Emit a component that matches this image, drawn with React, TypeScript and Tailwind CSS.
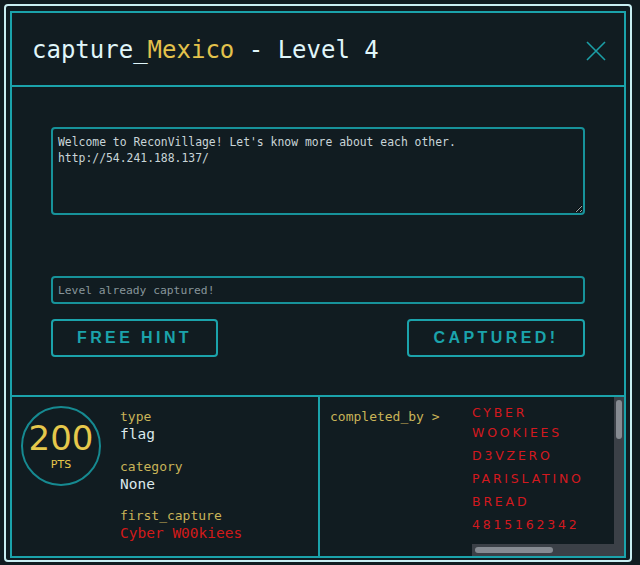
import React from "react";

const names = ["CYBER WOOKIEES", "D3VZERO", "PARISLATINO", "BREAD", "4815162342"];

export default function App() {
  return (
    <div className="w-[640px] h-[565px] bg-[#111c21] pt-[4px] pl-[4px]">
      <div className="w-[628px] h-[558px] border-2 border-[#c9eef2] rounded-[4px] pt-[5px] pl-[4px]">
        <div className="w-[616px] h-[547px] border-2 border-[#1ba3ab] flex flex-col">
          {/* header */}
          <div className="h-[74px] shrink-0 border-b-2 border-[#1ba3ab] flex items-center justify-between pl-[20px] pr-[18px]">
            <h1 className="mt-[2px] font-['DejaVu_Sans_Mono',monospace] text-[24px] text-[#e0f6fa]">
              capture_<span className="text-[#e3c24c]">Mexico</span> - Level 4
            </h1>
            <svg width="20" height="20" viewBox="0 0 20 20" className="mt-[3px]">
              <path d="M1 1 L19 19 M19 1 L1 19" stroke="#1b9fa7" strokeWidth="1.6" fill="none" />
            </svg>
          </div>

          {/* body */}
          <div className="h-[310px] shrink-0 border-b-2 border-[#1ba3ab] pt-[40px] px-[39px] flex flex-col">
            <textarea
              readOnly
              defaultValue={"Welcome to ReconVillage! Let's know more about each other.\nhttp://54.241.188.137/"}
              className="w-full h-[88px] bg-transparent border-2 border-[#17929a] rounded-[4px] pt-[5px] px-[5px] font-['DejaVu_Sans_Mono',monospace] text-[11.4px] leading-[16px] text-[#c9d5d8] outline-none"
            />
            <input
              readOnly
              placeholder="Level already captured!"
              className="mt-[61px] w-full h-[28px] bg-transparent border-2 border-[#17929a] rounded-[4px] px-[5px] font-['DejaVu_Sans_Mono',monospace] text-[11.3px] text-[#c9d5d8] placeholder:text-[#87959a] outline-none"
            />
            <div className="mt-[15px] flex justify-between">
              <button className="w-[167px] h-[38px] border-2 border-[#1ba3ab] rounded-[4px] font-['Liberation_Sans',sans-serif] font-bold text-[16px] tracking-[3.4px] text-[#1ba3ab]">
                FREE HINT
              </button>
              <button className="w-[178px] h-[38px] border-2 border-[#1ba3ab] rounded-[4px] font-['Liberation_Sans',sans-serif] font-bold text-[16px] tracking-[3.4px] text-[#1ba3ab]">
                CAPTURED!
              </button>
            </div>
          </div>

          {/* footer stats */}
          <div className="flex-1 flex min-h-0">
            <div className="w-[308px] shrink-0 border-r-2 border-[#1ba3ab] flex pl-[9px] pt-[9px]">
              <div className="w-[80px] h-[80px] rounded-full border-2 border-[#168a91] flex flex-col items-center pt-[13px] text-[#e6c84b] font-['DejaVu_Sans',sans-serif]">
                <div className="text-[34px] leading-[34px]">200</div>
                <div className="mt-[4px] text-[11px] leading-[11px]">PTS</div>
              </div>
              <div className="ml-[19px] pt-[3px] font-['DejaVu_Sans_Mono',monospace]">
                <div className="text-[13px] leading-[16px] text-[#c9b458]">type</div>
                <div className="text-[14.5px] leading-[18px] text-[#dbe8ec]">flag</div>
                <div className="mt-[16px] text-[13px] leading-[16px] text-[#c9b458]">category</div>
                <div className="text-[14.5px] leading-[18px] text-[#dbe8ec]">None</div>
                <div className="mt-[15px] text-[13px] leading-[16px] text-[#c9b458]">first_capture</div>
                <div className="text-[14.5px] leading-[18px] text-[#d01a1a]">Cyber W00kiees</div>
              </div>
            </div>

            <div className="flex-1 flex pl-[10px]">
              <div className="w-[142px] shrink-0 pt-[12px] font-['DejaVu_Sans_Mono',monospace] text-[13px] leading-[16px] text-[#c9b458]">
                completed_by &gt;
              </div>
              <div className="flex-1 flex flex-col min-w-0">
                <div className="flex-1 flex min-h-0">
                  <div className="flex-1 overflow-hidden pt-[6px] flex flex-col gap-[3px] font-['DejaVu_Sans',sans-serif] text-[12.5px] leading-[20px] tracking-[2.8px] text-[#d3191f]">
                    {names.map((n) => (
                      <div key={n}>{n}</div>
                    ))}
                  </div>
                  <div className="w-[10px] bg-[#3b4047] flex justify-center pt-[3px]">
                    <div className="w-[6px] h-[39px] rounded-full bg-[#868b92]" />
                  </div>
                </div>
                <div className="h-[12px] shrink-0 bg-[#3b4047] flex items-center pl-[3px]">
                  <div className="w-[78px] h-[6px] rounded-full bg-[#868b92]" />
                </div>
              </div>
            </div>
          </div>
        </div>
      </div>
    </div>
  );
}
